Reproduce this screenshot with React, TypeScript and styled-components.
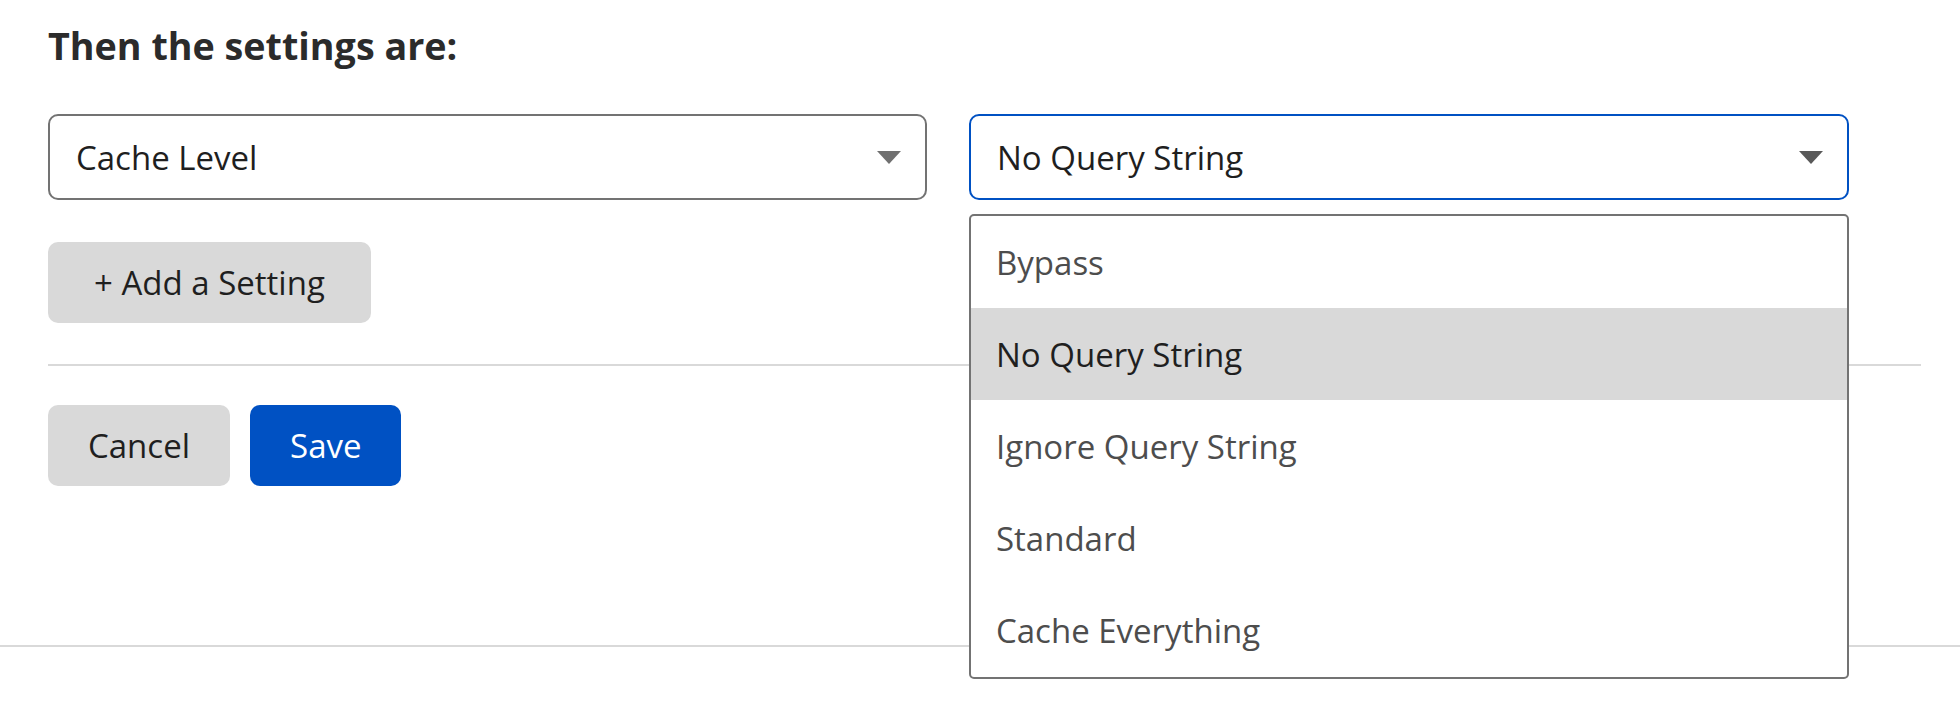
import React, {FC} from 'react';
import styled, {createGlobalStyle} from 'styled-components';

const GlobalStyle = createGlobalStyle`
    html, body {
        margin: 0;
        padding: 0;
        background: #ffffff;
    }
    body {
        font-family: 'Open Sans', 'Noto Sans', sans-serif;
        color: #222222;
    }
`;

const Page = styled.div`
    min-height: 100vh;
    background: #ffffff;
`;

const Section = styled.section`
    padding: 21px 39px 159px 48px;
    border-bottom: 2px solid #d9d9d9;
`;

const Heading = styled.h2`
    margin: 0;
    font-size: 37.7px;
    line-height: 50px;
    font-weight: 700;
    color: #2b2b2b;
`;

const SelectRow = styled.div`
    display: grid;
    grid-template-columns: 879px 880px;
    column-gap: 42px;
    margin-top: 43px;
`;

const SelectWrap = styled.div`
    position: relative;
`;

interface SelectBoxProps {
    focused?: boolean;
}

const SelectBox = styled.div<SelectBoxProps>`
    display: flex;
    align-items: center;
    justify-content: space-between;
    box-sizing: border-box;
    height: 86px;
    padding: 0 24px 0 26px;
    border: 2px solid ${(props) => (props.focused ? '#0051c3' : '#737373')};
    border-radius: 10px;
    font-size: 33px;
    color: #1f1f1f;
    background: #ffffff;
`;

interface CaretProps {
    dark?: boolean;
}

const Caret = styled.svg<CaretProps>`
    width: 24px;
    height: 13px;
    fill: ${(props) => (props.dark ? '#595959' : '#707070')};
    flex-shrink: 0;
`;

const Menu = styled.ul`
    position: absolute;
    top: calc(100% + 14px);
    left: 0;
    right: 0;
    margin: 0;
    padding: 0;
    list-style: none;
    border: 2px solid #737373;
    border-radius: 5px;
    background: #ffffff;
    z-index: 2;
`;

interface OptionProps {
    selected?: boolean;
}

const Option = styled.li<OptionProps>`
    display: flex;
    align-items: center;
    height: 92.2px;
    padding-left: 25px;
    font-size: 33px;
    color: ${(props) => (props.selected ? '#1f1f1f' : '#4d4d4d')};
    background: ${(props) => (props.selected ? '#d9d9d9' : 'transparent')};
`;

interface ButtonProps {
    primary?: boolean;
    wide?: boolean;
}

const Button = styled.button<ButtonProps>`
    box-sizing: border-box;
    height: 81px;
    padding: 0 ${(props) => (props.wide ? '46px' : '40px')};
    border: none;
    border-radius: 10px;
    font-family: inherit;
    font-size: 33px;
    color: ${(props) => (props.primary ? '#ffffff' : '#1f1f1f')};
    background: ${(props) => (props.primary ? '#0051c3' : '#d9d9d9')};
    cursor: pointer;
`;

const AddRow = styled.div`
    margin-top: 42px;
`;

const Divider = styled.hr`
    margin: 41px 0 0;
    border: none;
    border-top: 2px solid #d9d9d9;
`;

const Actions = styled.div`
    display: flex;
    gap: 20px;
    margin-top: 39px;
`;

const options = ['Bypass', 'No Query String', 'Ignore Query String', 'Standard', 'Cache Everything'];

const CaretIcon: FC<CaretProps> = ({dark}) => (
    <Caret dark={dark} viewBox="0 0 24 13">
        <polygon points="0,0 24,0 12,13" />
    </Caret>
);

const App: FC = () => {
    const selected = 'No Query String';

    return (
        <Page>
            <GlobalStyle />
            <Section>
                <Heading>{'Then the settings are:'}</Heading>
                <SelectRow>
                    <SelectWrap>
                        <SelectBox>
                            <span>{'Cache Level'}</span>
                            <CaretIcon />
                        </SelectBox>
                    </SelectWrap>
                    <SelectWrap>
                        <SelectBox focused>
                            <span>{selected}</span>
                            <CaretIcon dark />
                        </SelectBox>
                        <Menu>
                            {options.map((opt) => (
                                <Option key={opt} selected={opt === selected}>
                                    {opt}
                                </Option>
                            ))}
                        </Menu>
                    </SelectWrap>
                </SelectRow>
                <AddRow>
                    <Button wide>{'+ Add a Setting'}</Button>
                </AddRow>
                <Divider />
                <Actions>
                    <Button>{'Cancel'}</Button>
                    <Button primary>{'Save'}</Button>
                </Actions>
            </Section>
        </Page>
    );
};

export default App;
